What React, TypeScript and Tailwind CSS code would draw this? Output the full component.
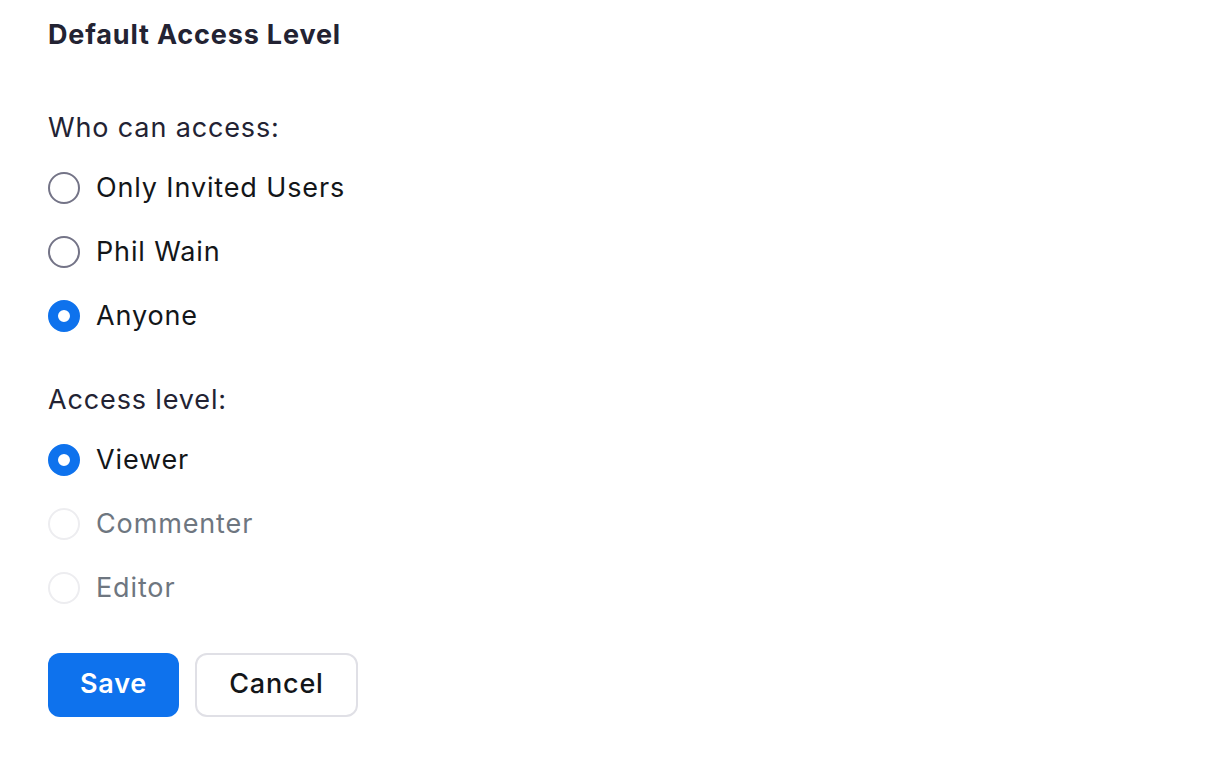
import React, { useState } from "react";

type Option = { value: string; label: string; disabled?: boolean };

const whoOptions: Option[] = [
  { value: "invited", label: "Only Invited Users" },
  { value: "phil", label: "Phil Wain" },
  { value: "anyone", label: "Anyone" },
];

const levelOptions: Option[] = [
  { value: "viewer", label: "Viewer" },
  { value: "commenter", label: "Commenter", disabled: true },
  { value: "editor", label: "Editor", disabled: true },
];

function Radio({
  option,
  checked,
  onSelect,
}: {
  option: Option;
  checked: boolean;
  onSelect: () => void;
}) {
  const ring = checked
    ? "border-[10px] border-[#0e72ed] bg-white"
    : option.disabled
    ? "border-2 border-[#ededf0] bg-white"
    : "border-2 border-[#747487] bg-white";

  return (
    <label
      className={`flex h-16 items-center gap-4 ${
        option.disabled ? "cursor-not-allowed" : "cursor-pointer"
      }`}
      onClick={() => !option.disabled && onSelect()}
    >
      <span className={`box-border h-8 w-8 shrink-0 rounded-full ${ring}`} />
      <span
        className={`text-[27px] leading-9 tracking-[0.032em] ${
          option.disabled ? "text-[#6e7680]" : "text-[#131619]"
        }`}
      >
        {option.label}
      </span>
    </label>
  );
}

export default function App() {
  const [who, setWho] = useState("anyone");
  const [level, setLevel] = useState("viewer");

  return (
    <main
      className="min-h-screen bg-white px-12 pt-[17px]"
      style={{ fontFamily: "Inter, 'Noto Sans', sans-serif" }}
    >
      <h1 className="text-[27px] font-bold leading-9 tracking-[0.031em] text-[#232333]">
        Default Access Level
      </h1>

      <section className="mt-[57px]">
        <p className="text-[27px] leading-9 tracking-[0.032em] text-[#232333]">
          Who can access:
        </p>
        <div className="mt-2.5 flex flex-col">
          {whoOptions.map((o) => (
            <Radio
              key={o.value}
              option={o}
              checked={who === o.value}
              onSelect={() => setWho(o.value)}
            />
          ))}
        </div>
      </section>

      <section className="mt-[34px]">
        <p className="text-[27px] leading-9 tracking-[0.032em] text-[#232333]">
          Access level:
        </p>
        <div className="mt-2.5 flex flex-col">
          {levelOptions.map((o) => (
            <Radio
              key={o.value}
              option={o}
              checked={level === o.value}
              onSelect={() => setLevel(o.value)}
            />
          ))}
        </div>
      </section>

      {/* Actions */}
      <div className="mt-[33px] flex gap-4">
        <button className="h-16 w-[131px] rounded-xl bg-[#0e72ed] pb-0.5 text-[27px] font-semibold tracking-[0.03em] text-white">
          Save
        </button>
        <button className="h-16 w-[163px] rounded-xl border-2 border-[#e0e0e6] bg-white pb-0.5 text-[27px] font-medium tracking-[0.03em] text-[#131619]">
          Cancel
        </button>
      </div>
    </main>
  );
}
